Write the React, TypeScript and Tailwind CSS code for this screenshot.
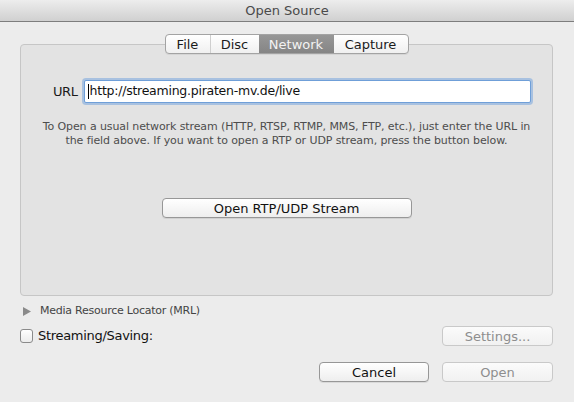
import React from "react";

const font = "font-['DejaVu_Sans',sans-serif]";

function Tabs() {
  const tabs = ["File", "Disc", "Network", "Capture"];
  return (
    <div className="relative z-10 mx-auto -mt-[11px] flex h-[20px] w-fit overflow-hidden rounded-[4px] border border-[#a3a3a3] bg-gradient-to-b from-[#ffffff] to-[#f0f0f0] shadow-[0_1px_0_rgba(0,0,0,0.06)]">
      {tabs.map((t, i) => {
        const active = t === "Network";
        return (
          <div
            key={t}
            className={
              "flex h-full items-center justify-center text-[13px] leading-none " +
              (active
                ? "bg-gradient-to-b from-[#979797] to-[#858585] text-[#f3f3f3] "
                : "text-[#1b1b1b] ") +
              (i === 0 ? "w-[45px] border-r border-[#cfcfcf] " : "") +
              (i === 1 ? "w-[48px] " : "") +
              (i === 2 ? "w-[75px] " : "") +
              (i === 3 ? "w-[74px] " : "")
            }
          >
            {t}
          </div>
        );
      })}
    </div>
  );
}

function Button({
  label,
  disabled,
  className,
}: {
  label: string;
  disabled?: boolean;
  className?: string;
}) {
  return (
    <button
      className={
        "flex h-[20px] items-center justify-center rounded-[4px] border text-[13px] leading-none " +
        (disabled
          ? "border-[#c9c9c9] bg-gradient-to-b from-[#fbfbfb] to-[#f1f1f1] text-[#8e8e8e] "
          : "border-[#979797] bg-gradient-to-b from-[#ffffff] to-[#eeeeee] text-[#111] shadow-[0_1px_0_rgba(0,0,0,0.08)] ") +
        (className ?? "")
      }
    >
      {label}
    </button>
  );
}

export default function App() {
  return (
    <div className={`h-[402px] w-[574px] overflow-hidden bg-[#ececec] ${font}`}>
      <div className="flex h-[22px] items-center justify-center border-b border-[#7d7d7d] bg-gradient-to-b from-[#ededed] to-[#d0d0d0] pt-px text-[13px] text-[#4a4a4a]">
        Open Source
      </div>

      <div className="pl-[20px] pr-[21px]">
        <div className="mt-[22px] flex h-[252px] flex-col rounded-[4px] border border-[#c6c6c6] bg-[#e3e3e3]">
          <Tabs />

          <div className="mt-[26px] flex items-center pl-[32px] pr-[21px]">
            <span className="mr-[6px] text-[13px] tracking-[-0.4px] text-[#1a1a1a]">URL</span>
            <div className="flex h-[23px] flex-1 items-center rounded-[2px] border border-[#6f9fd8] bg-white pl-[3px] shadow-[0_0_0_2px_rgba(120,165,222,0.55)]">
              <span className="mr-px h-[15px] w-px bg-black" />
              <span className="text-[12.5px] tracking-[-0.25px] text-[#111]">
                http://streaming.piraten-mv.de/live
              </span>
            </div>
          </div>

          <p className="mt-[17px] px-[8px] text-center text-[11px] leading-[14px] tracking-[-0.1px] text-[#4d4d4d]">
            To Open a usual network stream (HTTP, RTSP, RTMP, MMS, FTP, etc.), just enter the URL in
            <br />
            the field above. If you want to open a RTP or UDP stream, press the button below.
          </p>

          <Button label="Open RTP/UDP Stream" className="mx-auto mt-[50px] w-[250px]" />
        </div>

        <div className="mt-[8px] flex h-[14px] items-center">
          <svg width="8" height="9" viewBox="0 0 8 9" className="ml-[3px]">
            <path d="M0 0 L8 4.5 L0 9 Z" fill="#8a8a8a" />
          </svg>
          <span className="ml-[9px] text-[11px] tracking-[-0.25px] text-[#444]">
            Media Resource Locator (MRL)
          </span>
        </div>

        <div className="mt-[8px] flex h-[20px] items-center">
          <span className="h-[14px] w-[13px] rounded-[3px] border border-[#8a8a8a] bg-gradient-to-b from-[#ffffff] to-[#ececec]" />
          <span className="ml-[5px] text-[13px] tracking-[-0.3px] text-[#111]">Streaming/Saving:</span>
          <Button label="Settings..." disabled className="ml-auto w-[111px]" />
        </div>

        <div className="mt-[16px] flex justify-end gap-[13px]">
          <Button label="Cancel" className="w-[110px]" />
          <Button label="Open" disabled className="w-[111px]" />
        </div>
      </div>
    </div>
  );
}
